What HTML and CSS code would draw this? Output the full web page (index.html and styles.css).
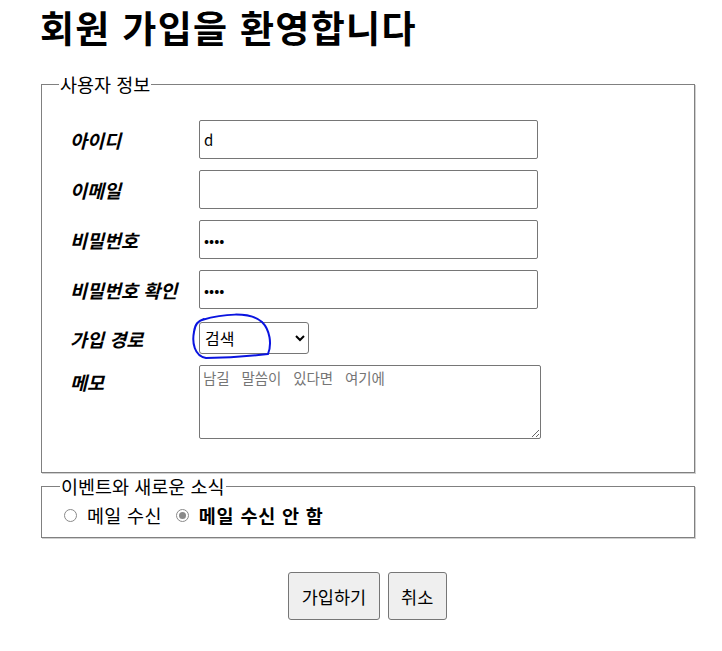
FILE: index.html
```html
<!DOCTYPE html>
<html lang="ko">
<head>
<meta charset="utf-8">
<link rel="stylesheet" href="styles.css">
</head>
<body>
<h1 class="title">회원 가입을 환영합니다</h1>
<form class="form">
  <fieldset class="box box-user">
    <legend class="legend">사용자 정보</legend>
    <div class="grid">
      <label class="lbl">아이디</label>
      <input class="field" type="text" value="d">
      <label class="lbl">이메일</label>
      <input class="field" type="text">
      <label class="lbl">비밀번호</label>
      <input class="field pw" type="password" value="abcd">
      <label class="lbl">비밀번호 확인</label>
      <input class="field pw" type="password" value="abcd">
      <label class="lbl lbl-sel">가입 경로</label>
      <div class="sel-wrap">
        <select class="sel"><option>검색</option></select>
        <svg class="mark" width="84" height="52" viewBox="0 0 84 52"><path d="M10 8 C 30 2, 58 -1, 70 10 C 78 18, 80 32, 76 42 C 60 44, 30 46, 14 46 C 2 44, 0 30, 2 20 C 3 12, 6 9, 12 7" fill="none" stroke="#0a14e0" stroke-width="2" stroke-linecap="round"/></svg>
      </div>
      <label class="lbl lbl-top">메모</label>
      <textarea class="memo" placeholder="남길 말씀이 있다면 여기에"></textarea>
    </div>
  </fieldset>
  <fieldset class="box box-news">
    <legend class="legend">이벤트와 새로운 소식</legend>
    <div class="radios">
      <input class="radio" type="radio" name="m" id="r1"><label class="rlbl" for="r1">메일 수신</label>
      <input class="radio" type="radio" name="m" id="r2" checked><label class="rlbl strong" for="r2">메일 수신 안 함</label>
    </div>
  </fieldset>
  <div class="actions">
    <button class="btn" type="button">가입하기</button>
    <button class="btn" type="button">취소</button>
  </div>
</form>
</body>
</html>
```
FILE: styles.css
```css
html, body { margin: 0; padding: 0; background: #fff; }
body {
  font-family: "Noto Sans CJK KR", "Noto Sans", sans-serif;
  font-size: 16px;
  color: #000;
  padding: 0 27px 0 40px;
}
.title {
  margin: 0;
  padding-top: 4px;
  font-size: 37px;
  font-weight: 700;
  line-height: 46px;
  letter-spacing: 1.3px;
}
.form { margin-top: 22px; }
.box {
  margin: 0;
  border: 1px solid #808080;
  box-shadow: 1px 1px 0 #d0d0d0;
  padding: 0;
  min-width: 0;
}
.box-user { padding: 0 0 33px 17px; margin-left: 1px; }
.legend {
  padding: 0 1px;
  margin: 0;
  font-size: 18.5px;
  line-height: 24px;
  white-space: nowrap;
}
.grid {
  display: grid;
  grid-template-columns: 129px 1fr;
  align-items: center;
  row-gap: 11px;
  margin: 24px 0 0 11px;
}
.lbl {
  font-weight: 700;
  font-style: italic;
  font-size: 18.5px;
  line-height: 24px;
}
.field {
  box-sizing: border-box;
  width: 339px;
  height: 39px;
  border: 1px solid #767676;
  border-radius: 2px;
  padding: 0 4px;
  font-family: "Noto Sans CJK KR", sans-serif;
  font-size: 15px;
  margin: 0;
}
.lbl-sel { margin-top: 4px; }
.sel-wrap { position: relative; width: 110px; height: 32px; margin-top: 2px; }
.sel {
  box-sizing: border-box;
  width: 110px;
  height: 32px;
  border: 1px solid #767676;
  border-radius: 3px;
  background: #fff;
  font-family: "Noto Sans CJK KR", sans-serif;
  font-size: 16px;
  padding: 0 1px;
  margin: 0;
}
.mark { position: absolute; left: -7px; top: -10px; pointer-events: none; }
.lbl-top { align-self: start; padding-top: 5px; }
.memo {
  box-sizing: border-box;
  width: 342px;
  height: 74px;
  border: 1px solid #767676;
  border-radius: 2px;
  padding: 1px 3px;
  font-family: "DejaVu Sans Mono", "Noto Sans CJK KR", monospace;
  font-size: 14.5px;
  word-spacing: 3px;
  resize: both;
  margin: 0;
  display: block;
}
.memo::placeholder { color: #757575; }
.box-news { margin-top: 1px; margin-left: 1px; padding: 0 0 5px 18px; }
.radios { display: flex; align-items: center; height: 34px; }
.radio {
  appearance: none;
  -webkit-appearance: none;
  box-sizing: border-box;
  width: 13px;
  height: 13px;
  border: 1px solid #8a8a8a;
  border-radius: 50%;
  background: #fff;
  margin: 0 10px 0 4px;
  display: inline-block;
  position: relative;
  flex: none;
}
.radio:checked::after {
  content: "";
  position: absolute;
  left: 2px; top: 2px;
  width: 7px; height: 7px;
  border-radius: 50%;
  background: #8a8a8a;
}
.rlbl { font-size: 18.5px; line-height: 24px; margin-right: 10px; letter-spacing: 0.3px; }
.strong { font-weight: 700; font-size: 18.5px; letter-spacing: 0.8px; }
.actions { display: flex; justify-content: center; gap: 8px; margin-top: 34px; }
.btn {
  height: 48px;
  padding: 0 12.5px;
  font-family: "Noto Sans CJK KR", sans-serif;
  font-size: 17.5px;
  background: #efefef;
  border: 1px solid #767676;
  border-radius: 3px;
  color: #000;
}
```
